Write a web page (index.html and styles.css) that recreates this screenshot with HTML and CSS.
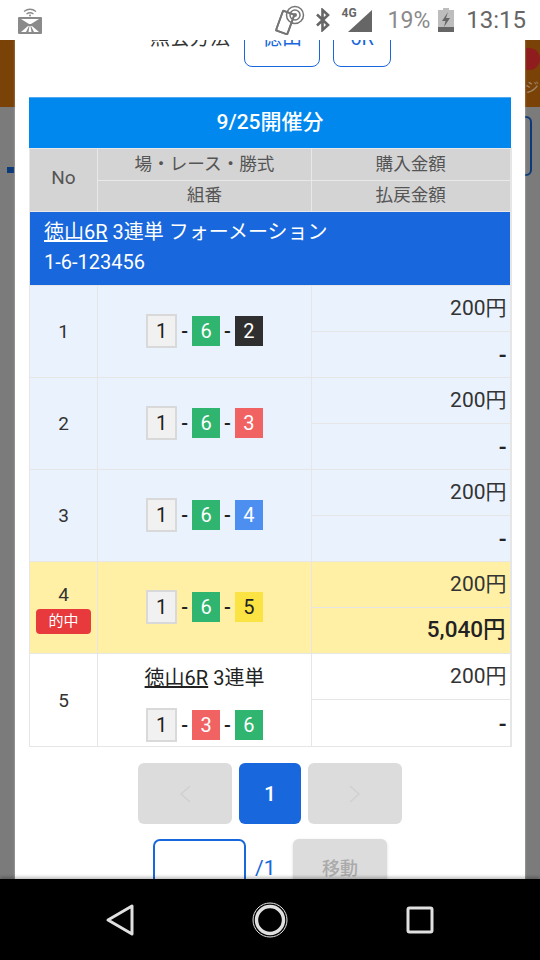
FILE: index.html
```html
<!DOCTYPE html>
<html>
<head>
	<meta charset="utf-8" />
	<title>購入履歴</title>
	<link rel="stylesheet" href="styles.css">
</head>
<body>
	<div class="statusBar">
		<svg class="castIcon" width="24" height="26" viewBox="0 0 24 26">
			<path d="M6 3.5 Q12 -1 18 3.5 M8.5 6 Q12 3.5 15.5 6" fill="none" stroke="#8a8a8a" stroke-width="1.3"/>
			<circle cx="12" cy="7.5" r="1" fill="#8a8a8a"/>
			<rect x="0" y="9" width="24" height="17" rx="1" fill="#8a8a8a"/>
			<path d="M3 11 H21 L13 16 H11 Z" fill="#fff"/>
			<path d="M3 24 L10 18 H11 L8 24 Z M21 24 L14 18 H13 L16 24 Z M10.5 24 L11.5 18 H12.5 L13.5 24 Z" fill="#fff"/>
		</svg>
		<div class="statusRight">
			<svg width="32" height="30" viewBox="0 0 32 30">
				<g transform="rotate(20 10 18)"><rect x="4" y="7" width="12" height="21" rx="2" fill="#fff" stroke="#757575" stroke-width="1.8"/></g>
				<circle cx="20" cy="10" r="8.5" fill="none" stroke="#757575" stroke-width="1.5"/>
				<circle cx="20" cy="10" r="5" fill="none" stroke="#757575" stroke-width="1.5"/>
				<circle cx="20" cy="10" r="2" fill="#757575"/>
				<g transform="rotate(20 10 18)"><path d="M4 7 H16 V28 H4 Z" fill="none" stroke="#757575" stroke-width="1.8" stroke-linejoin="round"/></g>
			</svg>
			<svg class="btIcon" width="16" height="24" viewBox="0 0 16 24">
				<path d="M2 6.5 L13 17 L7.5 22 V2 L13 7 L2 17.5" fill="none" stroke="#666" stroke-width="2.6"/>
			</svg>
			<div class="signal">
				<span class="netLabel">4G</span>
				<svg width="24" height="22" viewBox="0 0 24 22"><path d="M0 22 L24 0 V22 Z" fill="#666"/></svg>
			</div>
			<span class="battText">19%</span>
			<svg class="battIcon" width="16" height="24" viewBox="0 0 16 24">
				<path d="M5 0 H11 V2 H16 V24 H0 V2 H5 Z" fill="#bdbdbd"/>
				<rect y="19" width="16" height="5" fill="#666"/>
				<path d="M10 4 L4 13 H7.5 L6 19 L12 10 H8 Z" fill="#666"/>
			</svg>
			<span class="clock">13:15</span>
		</div>
	</div>

	<div class="screen">
		<div class="pageBehind">
			<div class="orangeBand">
				<span class="bandDot"></span>
				<span class="bandText">ジ</span>
			</div>
			<div class="backMark"></div>
			<div class="backButton"></div>
		</div>

		<div class="modal">
			<div class="payRow">
				<span class="payLabel">照会方法</span>
				<span class="payBtn payWide">徳山</span>
				<span class="payBtn payNarrow">6R</span>
			</div>

			<div class="dayTitle">9/25開催分</div>

			<table class="betTable">
				<colgroup>
					<col class="colNo">
					<col class="colBet">
					<col class="colYen">
				</colgroup>
				<tr class="headRow">
					<th rowspan="2" class="headNo">No</th>
					<th>場・レース・勝式</th>
					<th>購入金額</th>
				</tr>
				<tr class="headRow headRow2">
					<th>組番</th>
					<th>払戻金額</th>
				</tr>
				<tr>
					<td colspan="3" class="raceHead"><u>徳山6R</u> 3連単 フォーメーション<br>1-6-123456</td>
				</tr>

				<tr class="rowBlue">
					<td rowspan="2" class="noCell">1</td>
					<td rowspan="2"><div class="combo"><span class="boat b1">1</span>-<span class="boat b6">6</span>-<span class="boat b2">2</span></div></td>
					<td class="yen">200円</td>
				</tr>
				<tr class="rowBlue"><td class="yen payout">-</td></tr>

				<tr class="rowBlue">
					<td rowspan="2" class="noCell">2</td>
					<td rowspan="2"><div class="combo"><span class="boat b1">1</span>-<span class="boat b6">6</span>-<span class="boat b3">3</span></div></td>
					<td class="yen">200円</td>
				</tr>
				<tr class="rowBlue"><td class="yen payout">-</td></tr>

				<tr class="rowBlue">
					<td rowspan="2" class="noCell">3</td>
					<td rowspan="2"><div class="combo"><span class="boat b1">1</span>-<span class="boat b6">6</span>-<span class="boat b4">4</span></div></td>
					<td class="yen">200円</td>
				</tr>
				<tr class="rowBlue"><td class="yen payout">-</td></tr>

				<tr class="rowHit">
					<td rowspan="2" class="noCell hitNo">4<span class="hitBadge">的中</span></td>
					<td rowspan="2"><div class="combo"><span class="boat b1">1</span>-<span class="boat b6">6</span>-<span class="boat b5">5</span></div></td>
					<td class="yen">200円</td>
				</tr>
				<tr class="rowHit"><td class="yen payout hitYen">5,040円</td></tr>

				<tr class="rowWhite">
					<td rowspan="2">5</td>
					<td rowspan="2" class="comboCell">
						<div class="comboTitle"><u>徳山6R</u> 3連単</div>
						<div class="combo"><span class="boat b1">1</span>-<span class="boat b3">3</span>-<span class="boat b6">6</span></div>
					</td>
					<td class="yen">200円</td>
				</tr>
				<tr class="rowWhite"><td class="yen payout lastYen">-</td></tr>
			</table>

			<div class="pager">
				<div class="pageBtn pageArrow">
					<svg width="14" height="20" viewBox="0 0 14 20"><path d="M12 2 L3 10 L12 18" fill="none" stroke="#d0d0d0" stroke-width="1.5"/></svg>
				</div>
				<div class="pageBtn pageNum">1</div>
				<div class="pageBtn pageArrow">
					<svg width="14" height="20" viewBox="0 0 14 20"><path d="M2 2 L11 10 L2 18" fill="none" stroke="#d0d0d0" stroke-width="1.5"/></svg>
				</div>
			</div>

			<div class="jumpRow">
				<div class="jumpInput"></div>
				<span class="jumpTotal">/1</span>
				<div class="jumpBtn">移動</div>
			</div>
		</div>
	</div>

	<div class="navBar">
		<svg width="32" height="34" viewBox="0 0 32 34"><path d="M28 3 V31 L4 17 Z" fill="none" stroke="#e0e0e0" stroke-width="3" stroke-linejoin="round"/></svg>
		<svg width="36" height="36" viewBox="0 0 36 36">
			<circle cx="18" cy="18" r="17" fill="none" stroke="#e8e8e8" stroke-width="1"/>
			<circle cx="18" cy="18" r="13.5" fill="none" stroke="#e0e0e0" stroke-width="3.4"/>
		</svg>
		<svg width="28" height="28" viewBox="0 0 28 28"><rect x="2" y="2" width="24" height="24" rx="1.5" fill="none" stroke="#e0e0e0" stroke-width="3"/></svg>
	</div>
</body>
</html>
```

FILE: styles.css
```css
* {
	box-sizing: border-box;
}
html, body {
	height: 100%;
}
body {
	margin: 0;
	width: 540px;
	height: 960px;
	display: flex;
	flex-direction: column;
	overflow: hidden;
	background-color: #fff;
	font-family: 'Roboto', 'Noto Sans CJK JP', sans-serif;
	color: #333;
}

/* status bar */
.statusBar {
	height: 40px;
	flex: none;
	display: flex;
	justify-content: space-between;
	align-items: center;
	padding: 0 14px 0 18px;
	background-color: #fff;
}
.castIcon {
	margin-top: 1px;
}
.statusRight {
	display: flex;
	align-items: center;
}
.btIcon {
	margin-left: 8px;
}
.signal {
	display: flex;
	align-items: flex-end;
	position: relative;
	width: 30px;
	height: 23px;
	margin-left: 11px;
	justify-content: flex-end;
}
.netLabel {
	position: absolute;
	left: 0;
	top: -3px;
	font-size: 12px;
	font-weight: 700;
	color: #666;
}
.battText {
	margin-left: 16px;
	font-size: 23px;
	color: #8a8a8a;
}
.battIcon {
	margin-left: 8px;
}
.clock {
	margin-left: 12px;
	font-size: 24px;
	color: #666;
}

/* page behind the dialog */
.screen {
	flex: 1;
	position: relative;
	overflow: hidden;
	background-color: #7b7b7b;
}
.pageBehind {
	height: 100%;
}
.orangeBand {
	position: relative;
	height: 67px;
	background-color: #7a4207;
	overflow: hidden;
}
.bandDot {
	position: absolute;
	right: 0;
	top: 8px;
	width: 14px;
	height: 22px;
	border-radius: 0 11px 11px 0;
	background-color: #8f1d1d;
}
.bandText {
	position: absolute;
	right: 1px;
	top: 36px;
	font-size: 14px;
	color: #a08a70;
}
.backMark {
	position: absolute;
	left: 7px;
	top: 127px;
	width: 7px;
	height: 6px;
	background-color: #0c3a78;
}
.backButton {
	position: absolute;
	left: 500px;
	top: 76px;
	width: 32px;
	height: 60px;
	border: 2px solid #0c3a78;
	border-radius: 6px;
}

.modal {
	position: absolute;
	top: 0;
	left: 15px;
	width: 510px;
	bottom: 0;
	padding: 0 14px;
	background-color: #fff;
	overflow: hidden;
	box-shadow: 0 0 2px rgba(255,255,255,.5);
}

.payRow {
	height: 57px;
	margin-top: -30px;
	display: flex;
	align-items: flex-end;
	color: #333;
}
.payLabel {
	width: 215px;
	padding: 0 0 17px 121px;
	line-height: 24px;
	font-size: 20px;
	white-space: nowrap;
}
.payBtn {
	display: block;
	height: 55px;
	border: 1.5px solid #1867dc;
	border-radius: 8px;
	text-align: center;
	line-height: 50px;
	font-size: 20px;
	color: #1867dc;
}
.payWide {
	width: 76px;
}
.payNarrow {
	width: 58px;
	margin-left: 13px;
}

.dayTitle {
	height: 51px;
	margin-top: 30px;
	background-color: #0088ee;
	border-top: 1px solid #4faaf2;
	text-align: center;
	line-height: 48px;
	font-size: 21px;
	font-weight: 500;
	color: #fff;
}

.betTable {
	width: 481px;
	table-layout: fixed;
	border-collapse: collapse;
	border: 1px solid #e6e6e6;
	border-right: 2px solid #e6e6e6;
}
.colNo {
	width: 68px;
}
.colBet {
	width: 214px;
}
.colYen {
	width: 199px;
}
.betTable th, .betTable td {
	border: 1px solid #e6e6e6;
	padding: 0;
	text-align: center;
	font-size: 19px;
	font-weight: 400;
}
.betTable .headRow th {
	height: 32px;
	padding-bottom: 5px;
	background-color: #d4d4d4;
	font-size: 17.6px;
	color: #555;
	border-color: #e8e8e8;
}
.betTable .headRow2 th {
	height: 31px;
}
.betTable .headRow .headNo {
	font-size: 19px;
}
.betTable .raceHead {
	height: 74px;
	padding: 0 14px 3px;
	text-align: left;
	line-height: 30px;
	font-size: 20px;
	color: #fff;
	background-color: #1867dc;
}
.rowBlue td {
	background-color: #eaf2fe;
}
.rowHit td {
	background-color: #fff0a6;
}
.rowWhite td {
	background-color: #fff;
}
.rowBlue td[rowspan], .rowHit td[rowspan] {
	padding-bottom: 1px;
}
.betTable .noCell {
	padding-bottom: 3px;
}
.betTable .yen {
	height: 46px;
	padding: 0 3px 6px 0;
	text-align: right;
	font-size: 21px;
}
.betTable .payout {
	padding: 2px 3px 0 0;
	font-size: 23px;
	font-weight: 500;
	color: #222;
}
.betTable .hitYen {
	padding: 0 4px 8px 0;
	font-size: 22.5px;
}
.betTable .lastYen {
	height: 47px;
}
.betTable .hitNo {
	padding-top: 2px;
}
.hitBadge {
	display: block;
	width: 55px;
	height: 25px;
	margin: 3px auto 0;
	border-radius: 4px;
	background-color: #e8393d;
	line-height: 24px;
	font-size: 15px;
	color: #fff;
}

.combo {
	display: flex;
	justify-content: center;
	align-items: center;
	gap: 4px;
	font-size: 20px;
	font-weight: 500;
	color: #222;
}
.boat {
	width: 28px;
	height: 30px;
	line-height: 30px;
	text-align: center;
	font-size: 20px;
	font-weight: 400;
}
.b1 {
	width: 31px;
	height: 34px;
	line-height: 30px;
	background-color: #f1f1f1;
	border: 2px solid #d9d9d9;
}
.b2 {
	background-color: #2f2f2f;
	color: #fff;
}
.b3 {
	background-color: #f16363;
	color: #fff;
}
.b4 {
	background-color: #4d8ff0;
	color: #fff;
}
.b5 {
	background-color: #fce344;
	color: #222;
}
.b6 {
	background-color: #2fb56f;
	color: #fff;
}
.betTable .comboCell {
	padding-top: 4px;
}
.comboTitle {
	margin-bottom: 17px;
	font-size: 20px;
	color: #222;
}

/* paging */
.pager {
	display: flex;
	justify-content: center;
	gap: 7px;
	margin-top: 16px;
}
.pageBtn {
	height: 61px;
	border-radius: 6px;
	display: flex;
	justify-content: center;
	align-items: center;
}
.pageArrow {
	width: 94px;
	background-color: #dcdcdc;
}
.pageNum {
	width: 62px;
	background-color: #1867dc;
	color: #fff;
	font-size: 21px;
	font-weight: 500;
}
.jumpRow {
	display: flex;
	margin-top: 15px;
	padding-left: 124px;
}
.jumpInput {
	width: 93px;
	height: 60px;
	border: 2px solid #1867dc;
	border-radius: 7px;
}
.jumpTotal {
	width: 47px;
	padding: 17px 0 0 9px;
	font-size: 21px;
	color: #1867dc;
}
.jumpBtn {
	width: 94px;
	height: 60px;
	border-radius: 6px;
	background-color: #dcdcdc;
	text-align: center;
	line-height: 60px;
	font-size: 18px;
	font-weight: 500;
	color: #aaa;
	box-shadow: 0 1px 3px rgba(0,0,0,.15);
}

/* android nav bar */
.navBar {
	height: 81px;
	flex: none;
	display: grid;
	grid-template-columns: repeat(3, 150px);
	justify-items: center;
	align-items: center;
	padding-left: 45px;
	background-color: #000;
	position: relative;
	box-shadow: 0 -2px 3px rgba(0,0,0,.25);
}
```
